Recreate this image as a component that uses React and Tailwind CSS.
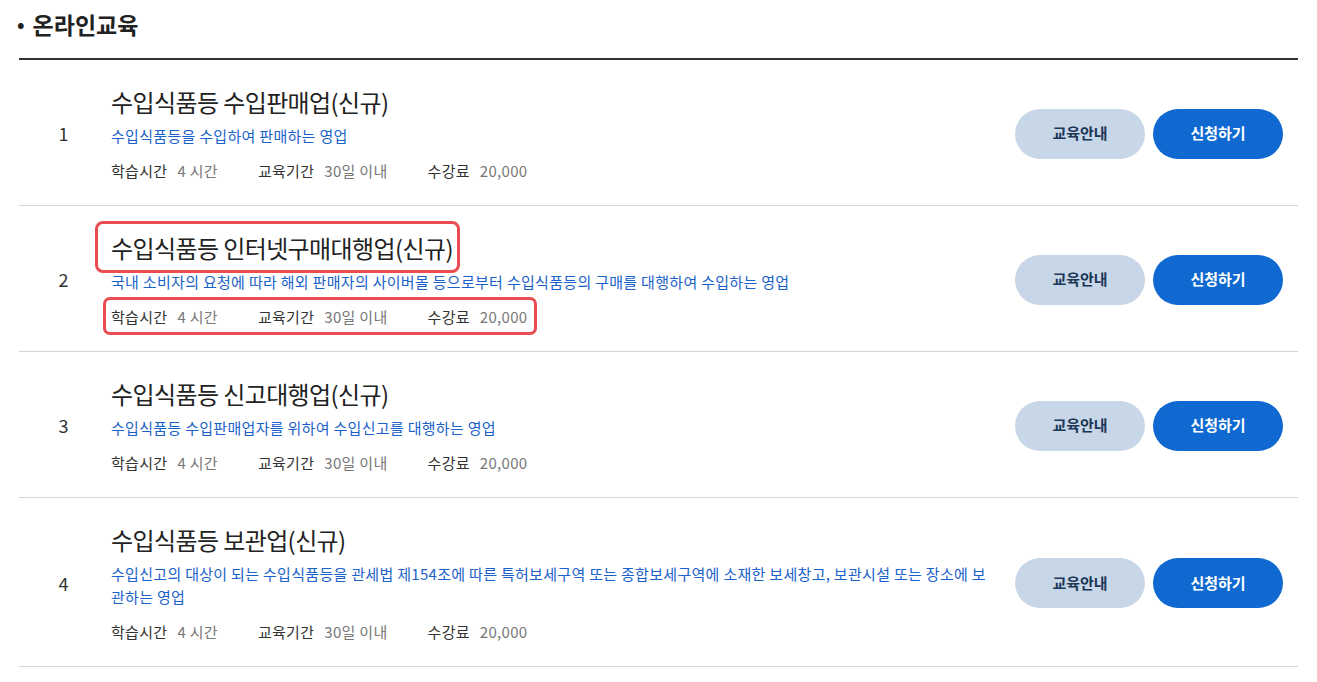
import React from 'react';

const courses = [
  {
    no: 1,
    title: '수입식품등 수입판매업(신규)',
    desc: '수입식품등을 수입하여 판매하는 영업',
  },
  {
    no: 2,
    title: '수입식품등 인터넷구매대행업(신규)',
    desc: '국내 소비자의 요청에 따라 해외 판매자의 사이버몰 등으로부터 수입식품등의 구매를 대행하여 수입하는 영업',
    marked: true,
  },
  {
    no: 3,
    title: '수입식품등 신고대행업(신규)',
    desc: '수입식품등 수입판매업자를 위하여 수입신고를 대행하는 영업',
  },
  {
    no: 4,
    title: '수입식품등 보관업(신규)',
    desc: '수입신고의 대상이 되는 수입식품등을 관세법 제154조에 따른 특허보세구역 또는 종합보세구역에 소재한 보세창고, 보관시설 또는 장소에 보관하는 영업',
  },
];

function Meta({ label, value }) {
  return (
    <span className="flex items-center gap-[10px]">
      <span className="text-[#333]">{label}</span>
      <span className="text-[#777]">{value}</span>
    </span>
  );
}

function CourseRow({ course }) {
  return (
    <li className="flex items-center border-b border-[#d4d4d4] pt-[25px] pb-[23px]">
      <div className="w-[92px] shrink-0 pr-[3px] text-center text-[18px] text-[#333]">{course.no}</div>
      <div className="flex-1 min-w-0 pr-[26px]">
        <h3 className="relative inline-block text-[24px] leading-[34px] text-[#222] tracking-[-0.6px]">
          {course.title}
          {course.marked && (
            <span className="absolute -left-[16px] -right-[7px] -top-[10px] -bottom-[8px] rounded-[8px] border-[3px] border-[#ea4c4f]" />
          )}
        </h3>
        <p className="mt-[5px] text-[15px] leading-[23px] text-[#1a62c9] tracking-[0.3px]">{course.desc}</p>
        <div className="relative mt-[13px] inline-flex text-[15px] leading-[22px] gap-[40px] tracking-[0.3px]">
          <Meta label="학습시간" value="4 시간" />
          <Meta label="교육기간" value="30일 이내" />
          <Meta label="수강료" value="20,000" />
          {course.marked && (
            <span className="absolute -left-[8px] -right-[10px] -top-[9px] -bottom-[7px] rounded-[7px] border-[3px] border-[#ea4c4f]" />
          )}
        </div>
      </div>
      <div className="flex shrink-0 gap-[8px] pr-[15px]">
        <button className="w-[130px] h-[50px] rounded-full bg-[#c8d7e7] text-[#1b3657] text-[15px] font-bold">
          교육안내
        </button>
        <button className="w-[130px] h-[50px] rounded-full bg-[#0f69d1] text-white text-[15px] font-bold">
          신청하기
        </button>
      </div>
    </li>
  );
}

export default function App() {
  return (
    <div
      className="min-h-screen bg-white pl-[19px] pr-[19px] pt-[8px]"
      style={{ fontFamily: '"Noto Sans CJK KR", "Noto Sans", sans-serif' }}
    >
      <h2 className="flex items-center gap-[8px] text-[23px] font-bold leading-[32px] text-[#222] pb-[18px] border-b-2 border-[#333]">
        <span className="text-[20px] -ml-[2px]">•</span>
        온라인교육
      </h2>
      <ul>
        {courses.map((c) => (
          <CourseRow key={c.no} course={c} />
        ))}
      </ul>
    </div>
  );
}
